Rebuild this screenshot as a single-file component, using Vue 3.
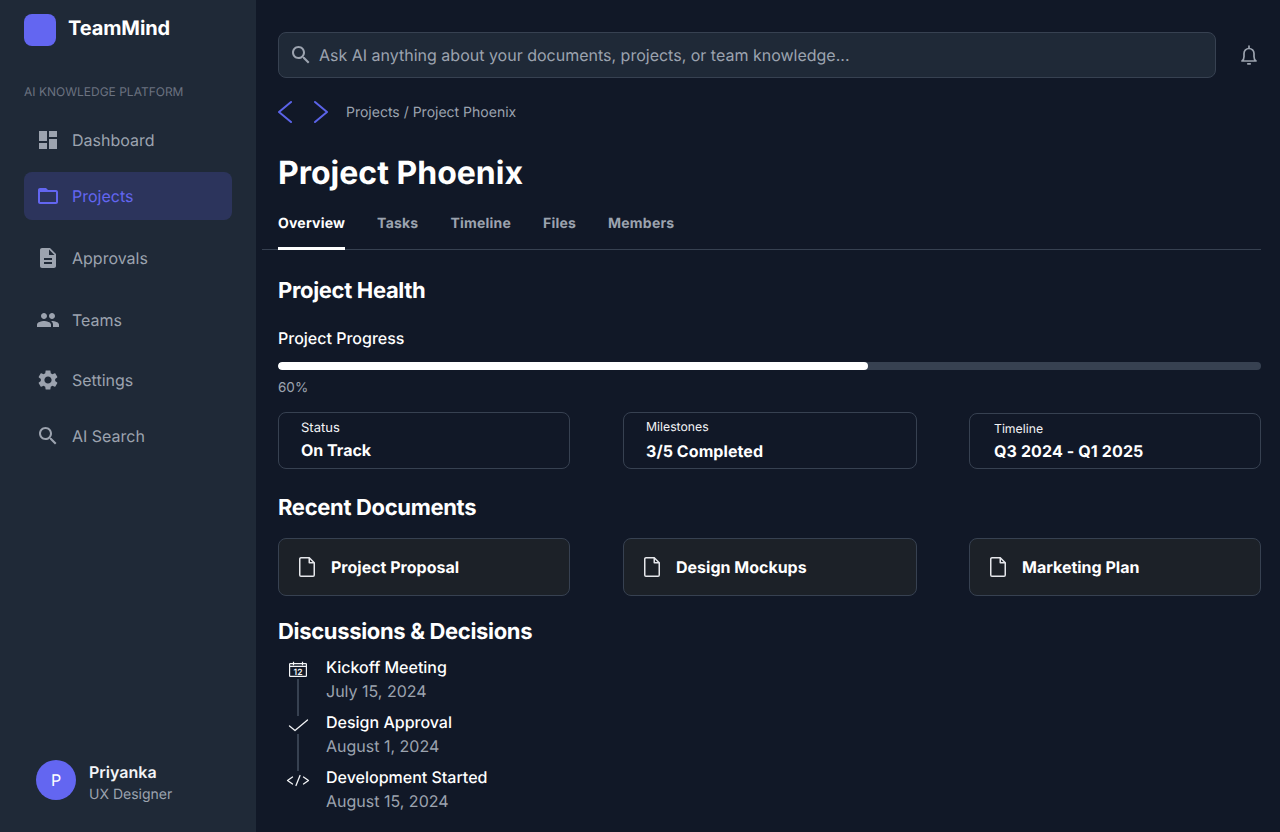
<script setup>
const nav = [
  { label: 'Dashboard', cls: 'n-dash', d: 'M3 13h8V3H3v10zm0 8h8v-6H3v6zm10 0h8V11h-8v10zm0-18v6h8V3h-8z' },
  { label: 'Projects', cls: 'n-proj active', d: 'M20 6h-8l-2-2H4c-1.1 0-1.99.9-1.99 2L2 18c0 1.1.9 2 2 2h16c1.1 0 2-.9 2-2V8c0-1.1-.9-2-2-2zm0 12H4V8h16v10z' },
  { label: 'Approvals', cls: 'n-appr', d: 'M14 2H6c-1.1 0-1.99.9-1.99 2L4 20c0 1.1.89 2 1.99 2H18c1.1 0 2-.9 2-2V8l-6-6zm2 16H8v-2h8v2zm0-4H8v-2h8v2zm-3-5V3.5L18.5 9H13z' },
  { label: 'Teams', cls: 'n-team', d: 'M16 11c1.66 0 2.99-1.34 2.99-3S17.66 5 16 5c-1.66 0-3 1.34-3 3s1.34 3 3 3zm-8 0c1.66 0 2.99-1.34 2.99-3S9.66 5 8 5C6.34 5 5 6.34 5 8s1.34 3 3 3zm0 2c-2.33 0-7 1.17-7 3.5V19h14v-2.5c0-2.33-4.67-3.5-7-3.5zm8 0c-.29 0-.62.02-.97.05 1.16.84 1.97 1.97 1.97 3.45V19h6v-2.5c0-2.33-4.67-3.5-7-3.5z' },
  { label: 'Settings', cls: 'n-set', d: 'M19.14 12.94c.04-.3.06-.61.06-.94 0-.32-.02-.64-.07-.94l2.03-1.58c.18-.14.23-.41.12-.61l-1.92-3.32c-.12-.22-.37-.29-.59-.22l-2.39.96c-.5-.38-1.03-.7-1.62-.94l-.36-2.54c-.04-.24-.24-.41-.48-.41h-3.84c-.24 0-.43.17-.47.41l-.36 2.54c-.59.24-1.13.57-1.62.94l-2.39-.96c-.22-.08-.47 0-.59.22L2.74 8.87c-.12.21-.08.47.12.61l2.03 1.58c-.05.3-.09.63-.09.94s.02.64.07.94l-2.03 1.58c-.18.14-.23.41-.12.61l1.92 3.32c.12.22.37.29.59.22l2.39-.96c.5.38 1.03.7 1.62.94l.36 2.54c.05.24.24.41.48.41h3.84c.24 0 .44-.17.47-.41l.36-2.54c.59-.24 1.13-.56 1.62-.94l2.39.96c.22.08.47 0 .59-.22l1.92-3.32c.12-.22.07-.47-.12-.61l-2.01-1.58zM12 15.6c-1.98 0-3.6-1.62-3.6-3.6s1.62-3.6 3.6-3.6 3.6 1.62 3.6 3.6-1.62 3.6-3.6 3.6z' },
  { label: 'AI Search', cls: 'n-srch', d: 'M15.5 14h-.79l-.28-.27C15.41 12.59 16 11.11 16 9.5 16 5.91 13.09 3 9.5 3S3 5.91 3 9.5 5.91 16 9.5 16c1.61 0 3.09-.59 4.23-1.57l.27.28v.79l5 4.99L20.49 19l-4.99-5zm-6 0C7.01 14 5 11.99 5 9.5S7.01 5 9.5 5 14 7.01 14 9.5 11.99 14 9.5 14z' },
]
const tabs = ['Overview', 'Tasks', 'Timeline', 'Files', 'Members']
const stats = [
  { label: 'Status', value: 'On Track', cls: '' },
  { label: 'Milestones', value: '3/5 Completed', cls: 'stat-mid' },
  { label: 'Timeline', value: 'Q3 2024 - Q1 2025', cls: 'stat-last' },
]
const docs = ['Project Proposal', 'Design Mockups', 'Marketing Plan']
const events = [
  { title: 'Kickoff Meeting', date: 'July 15, 2024', icon: 'cal' },
  { title: 'Design Approval', date: 'August 1, 2024', icon: 'check' },
  { title: 'Development Started', date: 'August 15, 2024', icon: 'code' },
]
</script>

<template>
  <div class="app">
    <aside class="sidebar">
      <div class="brand">
        <div class="logo"></div>
        <span class="brand-name">TeamMind</span>
      </div>
      <p class="tagline">AI Knowledge Platform</p>
      <nav class="nav">
        <a v-for="n in nav" :key="n.label" class="nav-item" :class="n.cls">
          <svg width="24" height="24" viewBox="0 0 24 24" fill="currentColor"><path :d="n.d" /></svg>
          <span>{{ n.label }}</span>
        </a>
      </nav>
      <div class="user">
        <div class="avatar">P</div>
        <div class="user-text">
          <span class="user-name">Priyanka</span>
          <span class="user-role">UX Designer</span>
        </div>
      </div>
    </aside>

    <main class="main">
      <div class="topbar">
        <div class="search">
          <svg width="24" height="24" viewBox="0 0 24 24" fill="#9ca3af"><path d="M15.5 14h-.79l-.28-.27C15.41 12.59 16 11.11 16 9.5 16 5.91 13.09 3 9.5 3S3 5.91 3 9.5 5.91 16 9.5 16c1.61 0 3.09-.59 4.23-1.57l.27.28v.79l5 4.99L20.49 19l-4.99-5zm-6 0C7.01 14 5 11.99 5 9.5S7.01 5 9.5 5 14 7.01 14 9.5 11.99 14 9.5 14z" /></svg>
          <span class="placeholder">Ask AI anything about your documents, projects, or team knowledge...</span>
        </div>
        <svg class="bell" width="24" height="24" viewBox="0 0 24 24" fill="none" stroke="#9ca3af" stroke-width="1.7" stroke-linejoin="round" stroke-linecap="round">
          <path d="M5 18c1.500-1 2-2.500 2-4.500v-3a5 5 0 0 1 10 0v3c0 2 .5 3.500 2 4.500z" />
          <path d="M12 3v2" />
          <path d="M10.800 20.800h2.400" />
        </svg>
      </div>

      <div class="crumbs">
        <svg width="16" height="24" viewBox="0 0 16 24" fill="none" stroke="#5b63e8" stroke-width="2" stroke-linecap="round" stroke-linejoin="round"><path d="M13 2 1 12l12 10" /></svg>
        <svg width="16" height="24" viewBox="0 0 16 24" fill="none" stroke="#5b63e8" stroke-width="2" stroke-linecap="round" stroke-linejoin="round"><path d="M1 2l12 10L1 22" /></svg>
        <span class="crumb-text">Projects / Project Phoenix</span>
      </div>

      <h1 class="title">Project Phoenix</h1>

      <div class="tabs">
        <span v-for="(t, i) in tabs" :key="t" class="tab" :class="{ current: i === 0 }">{{ t }}</span>
      </div>

      <section class="content">
        <h2 class="h-health">Project Health</h2>
        <div class="progress-label">Project Progress</div>
        <div class="track"><div class="fill" :style="{ width: '60%' }"></div></div>
        <div class="pct">60%</div>

        <div class="row stats">
          <div v-for="s in stats" :key="s.label" class="stat" :class="s.cls">
            <span class="stat-label">{{ s.label }}</span>
            <span class="stat-value">{{ s.value }}</span>
          </div>
        </div>

        <h2 class="h-docs">Recent Documents</h2>
        <div class="row docs">
          <div v-for="d in docs" :key="d" class="doc">
            <svg width="24" height="24" viewBox="0 0 24 24" fill="none" stroke="#e5e7eb" stroke-width="1.5" stroke-linejoin="round">
              <path d="M14.250 2.750H6a1.250 1.250 0 0 0-1.250 1.250v16A1.250 1.250 0 0 0 6 21.250h12a1.250 1.250 0 0 0 1.250-1.250V7.750z" />
              <path d="M14.250 2.750v5h5" />
            </svg>
            <span>{{ d }}</span>
          </div>
        </div>

        <h2 class="h-disc">Discussions &amp; Decisions</h2>
        <ul class="timeline">
          <li v-for="(e, i) in events" :key="e.title" class="event">
            <div class="rail">
              <svg v-if="e.icon === 'cal'" width="24" height="24" viewBox="0 0 24 24" fill="none" stroke="#f3f4f6" stroke-width="1.2">
                <rect x="3.600" y="6.600" width="16.800" height="12.800" rx=".6" />
                <path d="M3.600 9.400h16.800M7.500 4.800v3.400M16.500 4.800v3.400" />
                <text x="12" y="17.800" text-anchor="middle" class="cal-num">12</text>
              </svg>
              <svg v-else-if="e.icon === 'check'" width="24" height="24" viewBox="0 0 24 24" fill="none" stroke="#f3f4f6" stroke-width="1.300" stroke-linecap="round" stroke-linejoin="round"><path d="M3.500 14 9 18.500 21.500 8" /></svg>
              <svg v-else width="24" height="24" viewBox="0 0 24 24" fill="none" stroke="#f3f4f6" stroke-width="1.300" stroke-linecap="round" stroke-linejoin="round"><path d="M6.500 10 1.500 13.500 6.500 17M17.500 10l5 3.500-5 3.500M14 8.500l-4 10" /></svg>
              <div v-if="i < events.length - 1" class="line"></div>
            </div>
            <div class="event-text">
              <span class="event-title">{{ e.title }}</span>
              <span class="event-date">{{ e.date }}</span>
            </div>
          </li>
        </ul>
      </section>
    </main>
  </div>
</template>

<style>
html, body { background: #111827; }
</style>

<style scoped>
.app {
  display: flex;
  width: 1280px;
  height: 832px;
  overflow: hidden;
  background: #111827;
  font-family: Inter, "Liberation Sans", sans-serif;
  color: #fff;
  text-rendering: geometricPrecision;
}
.sidebar {
  width: 256px;
  flex: none;
  box-sizing: border-box;
  background: #1f2937;
  padding: 14px 24px 28px;
  display: flex;
  flex-direction: column;
}
.brand { display: flex; align-items: flex-start; gap: 12px; }
.logo { width: 32px; height: 32px; border-radius: 8px; background: #6366f1; }
.brand-name { font-size: 20px; font-weight: 700; line-height: 28px; letter-spacing: -0.1px; }
.tagline {
  margin: 38px 0 0;
  font-size: 12px;
  line-height: 16px;
  text-transform: uppercase;
  color: #6b7280;
}
.nav { display: flex; flex-direction: column; margin-top: 16px; }
.nav-item {
  display: flex;
  align-items: center;
  gap: 12px;
  height: 48px;
  padding: 0 12px;
  border-radius: 8px;
  font-size: 16px;
  color: #9ca3af;
}
.n-proj { margin-top: 8px; }
.n-appr { margin-top: 14px; }
.n-team { margin-top: 14px; }
.n-set { margin-top: 12px; }
.n-srch { margin-top: 8px; }
.active { background: rgba(99, 102, 241, 0.2); color: #6366f1; }
.user { margin-top: auto; display: flex; align-items: center; gap: 13px; padding-left: 12px; }
.avatar {
  width: 40px;
  height: 40px;
  border-radius: 50%;
  background: #6366f1;
  display: flex;
  align-items: center;
  justify-content: center;
  font-size: 16px;
}
.user-text { display: flex; flex-direction: column; padding-top: 4px; margin-bottom: -1px; }
.user-name { font-size: 16px; font-weight: 600; line-height: 24px; color: #f3f4f6; }
.user-role { font-size: 14px; line-height: 20px; margin-top: 1px; color: #9ca3af; }

.main { flex: 1; min-width: 0; box-sizing: border-box; padding: 32px 19px 0 6px; }
.topbar { display: flex; align-items: center; padding-left: 16px; gap: 21px; }
.search {
  flex: 1;
  height: 46px;
  box-sizing: border-box;
  background: #1f2937;
  border: 1px solid #374151;
  border-radius: 8px;
  display: flex;
  align-items: center;
  gap: 6px;
  padding: 0 10px;
}
.placeholder { font-size: 16px; color: #9ca3af; }
.bell { flex: none; }
.crumbs { display: flex; align-items: center; margin-top: 22px; padding-left: 16px; height: 24px; gap: 20px; }
.crumb-text { font-size: 14px; color: #9ca3af; margin-left: -4px; }
.title { margin: 29px 0 0; padding-left: 16px; font-size: 32px; line-height: 40px; font-weight: 700; }
.tabs { display: flex; gap: 32px; margin-top: 11px; padding-left: 16px; border-bottom: 1px solid #374151; }
.tab {
  font-size: 14px;
  font-weight: 700;
  line-height: 20px;
  letter-spacing: 0.015em;
  padding: 10px 0 13px;
  color: #9ca3af;
  border-bottom: 3px solid transparent;
  margin-bottom: -1px;
}
.tab.current { color: #fff; border-bottom-color: #fff; }

.content { padding-left: 16px; }
h2 { margin: 0; font-size: 22px; line-height: 28px; font-weight: 700; letter-spacing: -0.015em; }
.h-health { margin-top: 27px; }
.progress-label { margin-top: 21px; font-size: 16px; line-height: 24px; font-weight: 500; }
.track { margin-top: 12px; height: 8px; border-radius: 4px; background: #374151; overflow: hidden; }
.fill { height: 100%; background: #fff; border-radius: 4px; }
.pct { margin-top: 8px; font-size: 13.5px; line-height: 20px; color: #9ca3af; }
.row { display: grid; grid-template-columns: 345px 346px 292px; }
.row > * { width: 292px; }
.row > :nth-child(2) { width: 294px; }
.stats { margin-top: 14px; }
.stat {
  height: 57px;
  box-sizing: border-box;
  border: 1px solid #374151;
  border-radius: 8px;
  padding: 6px 22px 0;
  display: flex;
  flex-direction: column;
  gap: 1px;
}
.stat-mid { padding-top: 5px; gap: 3px; }
.stat-last { padding: 6px 24px 0; height: 56px; margin-top: 1px; gap: 0.5px; }
.stat-label { font-size: 13px; line-height: 18px; color: #f3f4f6; }
.stat-mid .stat-label, .stat-last .stat-label { font-size: 12.25px; }
.stat-value { font-size: 16px; line-height: 24px; font-weight: 700; }
.stat-mid .stat-value { letter-spacing: 0.08px; }
.stat-last .stat-value { letter-spacing: 0.12px; }
.h-docs { margin-top: 25px; }
.docs { margin-top: 16px; }
.doc {
  height: 58px;
  box-sizing: border-box;
  border: 1px solid #374151;
  border-radius: 8px;
  background: #1c2128;
  display: flex;
  align-items: center;
  gap: 12px;
  padding-left: 16px;
  font-size: 16px;
  font-weight: 700;
}
.h-disc { margin-top: 22px; }
.timeline { list-style: none; margin: 9px 0 0; padding: 0; }
.event { display: flex; gap: 8px; height: 55px; }
.rail { width: 40px; display: flex; flex-direction: column; align-items: center; flex: none; padding-top: 2px; }
.rail svg { flex: none; }
.line { width: 2px; height: 37px; flex: none; background: #374151; margin-top: -2px; }
.event-text { display: flex; flex-direction: column; }
.event-title { font-size: 16px; line-height: 24px; font-weight: 500; }
.event-date { font-size: 16px; line-height: 24px; color: #9ca3af; }
.cal-num { font-family: Inter, sans-serif; font-size: 8.500px; font-weight: 600; fill: #f3f4f6; stroke: none; }
</style>
